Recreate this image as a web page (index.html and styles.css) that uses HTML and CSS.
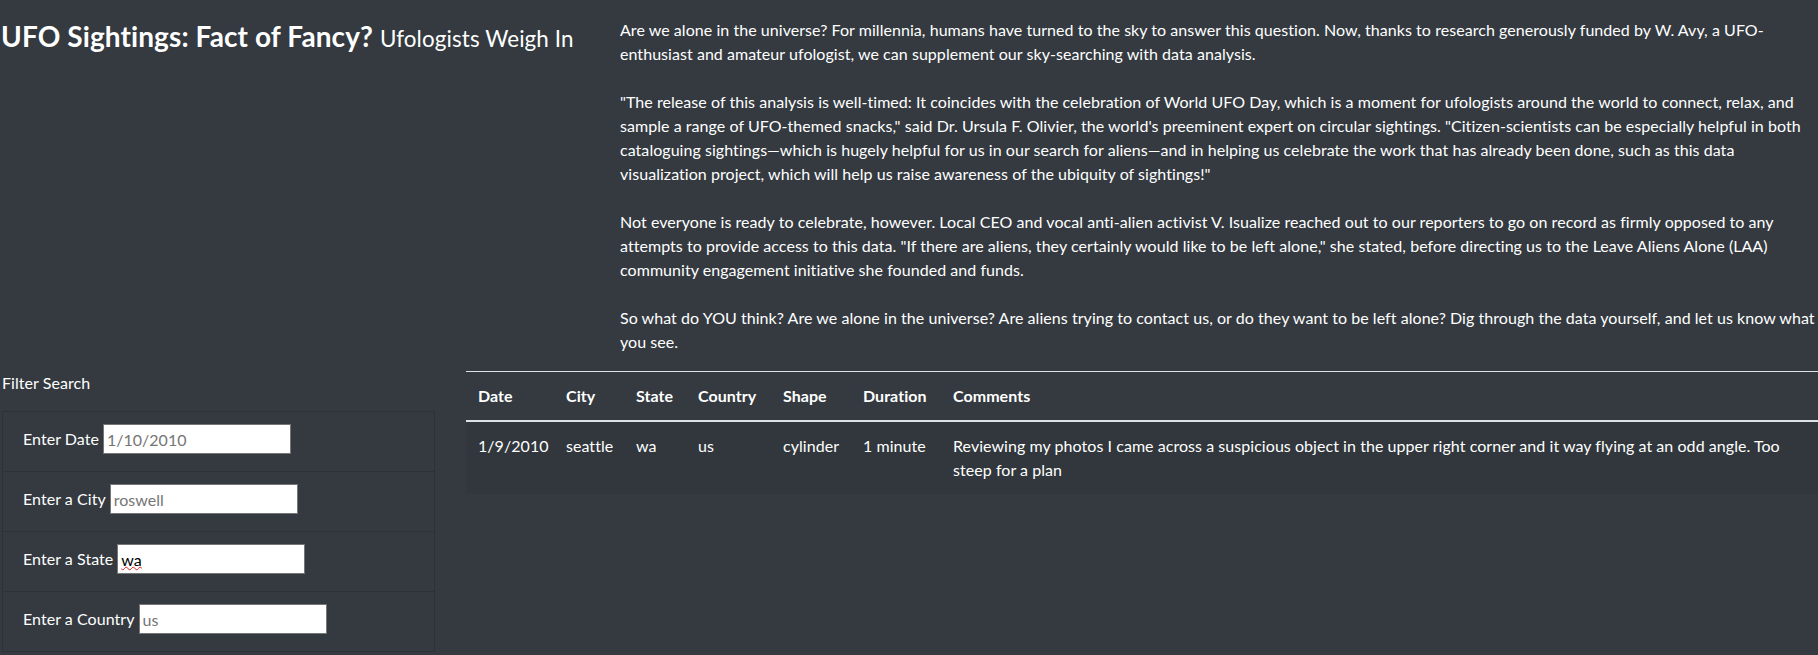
FILE: index.html
```html
<!DOCTYPE html>
<html lang="en">
<head>
<meta charset="utf-8">
<title>UFO Sightings</title>
<link rel="stylesheet" href="styles.css">
</head>
<body>
<div class="page">
  <header class="top">
    <div class="headline">
      <h3 class="title">UFO Sightings: Fact of Fancy? <small class="subtitle">Ufologists Weigh In</small></h3>
    </div>
    <article class="article">
      <p>Are we alone in the universe? For millennia, humans have turned to the sky to answer this question. Now, thanks to research generously funded by W. Avy, a UFO-enthusiast and amateur ufologist, we can supplement our sky-searching with data analysis.</p>
      <p>"The release of this analysis is well-timed: It coincides with the celebration of World UFO Day, which is a moment for ufologists around the world to connect, relax, and sample a range of UFO-themed snacks," said Dr. Ursula F. Olivier, the world's preeminent expert on circular sightings. "Citizen-scientists can be especially helpful in both cataloguing sightings—which is hugely helpful for us in our search for aliens—and in helping us celebrate the work that has already been done, such as this data visualization project, which will help us raise awareness of the ubiquity of sightings!"</p>
      <p>Not everyone is ready to celebrate, however. Local CEO and vocal anti-alien activist V. Isualize reached out to our reporters to go on record as firmly opposed to any attempts to provide access to this data. "If there are aliens, they certainly would like to be left alone," she stated, before directing us to the Leave Aliens Alone (LAA) community engagement initiative she founded and funds.</p>
      <p>So what do YOU think? Are we alone in the universe? Are aliens trying to contact us, or do they want to be left alone? Dig through the data yourself, and let us know what you see.</p>
    </article>
  </header>
  <main class="bottom">
    <aside class="filters">
      <p class="filter-title">Filter Search</p>
      <ul class="filter-list">
        <li class="filter-item"><label class="filter-label" for="datetime">Enter Date</label><input class="filter-input" id="datetime" type="text" placeholder="1/10/2010"></li>
        <li class="filter-item"><label class="filter-label" for="city">Enter a City</label><input class="filter-input" id="city" type="text" placeholder="roswell"></li>
        <li class="filter-item"><label class="filter-label" for="state">Enter a State</label><span class="typo-wrap"><input class="filter-input" id="state" type="text" value="wa" placeholder="ca"></span></li>
        <li class="filter-item"><label class="filter-label" for="country">Enter a Country</label><input class="filter-input" id="country" type="text" placeholder="us"></li>
      </ul>
    </aside>
    <section class="results">
      <table class="ufo-table">
        <thead>
          <tr>
            <th class="col-date">Date</th>
            <th class="col-city">City</th>
            <th class="col-state">State</th>
            <th class="col-country">Country</th>
            <th class="col-shape">Shape</th>
            <th class="col-duration">Duration</th>
            <th class="col-comments">Comments</th>
          </tr>
        </thead>
        <tbody>
          <tr>
            <td>1/9/2010</td>
            <td>seattle</td>
            <td>wa</td>
            <td>us</td>
            <td>cylinder</td>
            <td>1 minute</td>
            <td>Reviewing my photos I came across a suspicious object in the upper right corner and it way flying at an odd angle. Too steep for a plan</td>
          </tr>
        </tbody>
      </table>
    </section>
  </main>
</div>
</body>
</html>
```
FILE: styles.css
```css
html, body {
  margin: 0;
  padding: 0;
}

body {
  background: #343a40;
  color: #fff;
  font-family: Lato, "Open Sans", sans-serif;
  font-size: 16px;
  font-weight: 400;
  line-height: 1.5;
  letter-spacing: 0.05px;
  overflow-x: hidden;
}

.top {
  display: grid;
  grid-template-columns: 620px 1fr;
}

.headline {
  padding-left: 1px;
}

.title {
  margin: 20px 0 0;
  font-size: 28px;
  font-weight: 700;
  line-height: 1.2;
  letter-spacing: 0.1px;
}

.subtitle {
  font-size: 80%;
  font-weight: 400;
}

.article {
  padding-top: 18px;
}

.article p {
  margin: 0 0 24px;
}

.article p:last-child {
  margin-bottom: 17px;
}

.bottom {
  display: grid;
  grid-template-columns: 466px 1fr;
  align-items: start;
}

.filters {
  padding-left: 2px;
}

.filter-title {
  margin: 0 0 16px;
}

.filter-list {
  list-style: none;
  margin: 0;
  padding: 0;
  width: 433px;
  box-sizing: border-box;
  border: 1px solid rgba(0, 0, 0, 0.125);
  border-top: 0;
}

.filter-item {
  display: flex;
  align-items: flex-start;
  height: 60px;
  box-sizing: border-box;
  border-top: 1px solid rgba(0, 0, 0, 0.125);
  padding: 12px 20px 0;
}

.filter-label {
  line-height: 30px;
  margin-right: 4px;
  white-space: nowrap;
}

.filter-input {
  width: 188px;
  height: 30px;
  box-sizing: border-box;
  margin: 0;
  padding: 0 3px;
  border: 1px solid #767676;
  border-radius: 0;
  background: #fff;
  color: #000;
  font-family: inherit;
  font-size: 16px;
  line-height: 24px;
  outline: none;
}

.filter-input::placeholder {
  color: #757575;
  opacity: 1;
}

.typo-wrap {
  position: relative;
  display: block;
}

.typo-wrap::after {
  content: "wa";
  position: absolute;
  left: 4px;
  top: 4px;
  font-size: 16px;
  line-height: 20px;
  color: transparent;
  text-decoration: underline wavy #e0201a;
  text-decoration-thickness: 1px;
  text-underline-offset: 2px;
  pointer-events: none;
}

.ufo-table {
  width: 100%;
  border-collapse: separate;
  border-spacing: 0;
  table-layout: fixed;
  color: #fff;
}

.ufo-table th,
.ufo-table td {
  padding: 12px;
  text-align: left;
  vertical-align: top;
  line-height: 24px;
}

.ufo-table th {
  font-weight: 700;
  border-top: 1px solid #dee2e6;
  border-bottom: 2px solid #dee2e6;
}

.ufo-table tbody tr:nth-child(odd) {
  background: rgba(0, 0, 0, 0.05);
}

.col-date { width: 64px; }
.col-city { width: 46px; }
.col-state { width: 38px; }
.col-country { width: 61px; }
.col-shape { width: 56px; }
.col-duration { width: 66px; }
.col-comments { width: auto; }
```
